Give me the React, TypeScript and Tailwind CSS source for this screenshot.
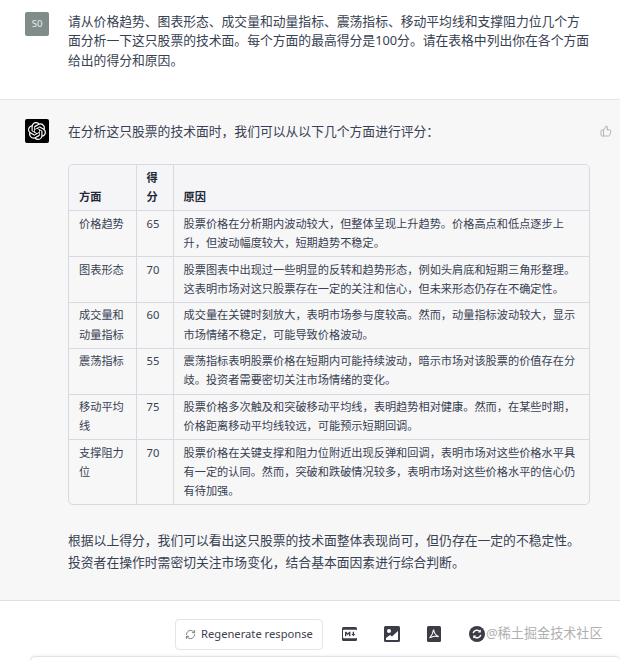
import { RefreshCw, ThumbsUp } from "lucide-react";
import { FaMarkdown } from "react-icons/fa";
import { SiOpenai } from "react-icons/si";

const rows = [
  {
    name: "价格趋势",
    score: 65,
    reason: "股票价格在分析期内波动较大，但整体呈现上升趋势。价格高点和低点逐步上升，但波动幅度较大，短期趋势不稳定。",
  },
  {
    name: "图表形态",
    score: 70,
    reason: "股票图表中出现过一些明显的反转和趋势形态，例如头肩底和短期三角形整理。这表明市场对这只股票存在一定的关注和信心，但未来形态仍存在不确定性。",
  },
  {
    name: "成交量和动量指标",
    score: 60,
    reason: "成交量在关键时刻放大，表明市场参与度较高。然而，动量指标波动较大，显示市场情绪不稳定，可能导致价格波动。",
  },
  {
    name: "震荡指标",
    score: 55,
    reason: "震荡指标表明股票价格在短期内可能持续波动，暗示市场对该股票的价值存在分歧。投资者需要密切关注市场情绪的变化。",
  },
  {
    name: "移动平均线",
    score: 75,
    reason: "股票价格多次触及和突破移动平均线，表明趋势相对健康。然而，在某些时期，价格距离移动平均线较远，可能预示短期回调。",
  },
  {
    name: "支撑阻力位",
    score: 70,
    reason: "股票价格在关键支撑和阻力位附近出现反弹和回调，表明市场对这些价格水平具有一定的认同。然而，突破和跌破情况较多，表明市场对这些价格水平的信心仍有待加强。",
  },
];

function ScoreTable() {
  return (
    <div className="mt-[23px] w-[522px] overflow-hidden rounded-[5px] border border-[#d9d9e3]">
      <table className="w-full table-fixed border-collapse text-[11.2px] leading-[19.2px]">
        <colgroup>
          <col className="w-[67px]" />
          <col className="w-[37px]" />
          <col />
        </colgroup>
        <thead>
          <tr className="h-[45px] bg-[#f5f5f7] text-left align-bottom font-bold text-[#1f2937]">
            <th className="border-r border-[#d9d9e3] pt-[3px] pr-[8px] pb-[4px] pl-[10px]">方面</th>
            <th className="border-r border-[#d9d9e3] pt-[3px] pr-[10px] pb-[4px] pl-[10px]">得分</th>
            <th className="pt-[3px] pb-[4px] pl-[10px]">原因</th>
          </tr>
        </thead>
        <tbody>
          {rows.map((row) => (
            <tr key={row.name} className="border-t border-[#d9d9e3] align-top">
              <td className="border-r border-[#d9d9e3] pt-[2.4px] pr-[8px] pb-[4px] pl-[10px]">{row.name}</td>
              <td className="border-r border-[#d9d9e3] pt-[2.4px] pr-[8px] pb-[4px] pl-[10px]">{row.score}</td>
              <td className="pt-[2.4px] pr-[12px] pb-[4px] pl-[10px]">{row.reason}</td>
            </tr>
          ))}
        </tbody>
      </table>
    </div>
  );
}

function ImageIcon() {
  return (
    <svg width="16" height="16" viewBox="0 0 16 16">
      <rect width="16" height="16" rx="1.5" fill="#3b3c46" />
      <circle cx="5" cy="5" r="2" fill="#fff" />
      <path d="M2 14 L2 12 L6 9 L8 10.5 L14 5 L14 14 Z" fill="#fff" />
    </svg>
  );
}

function PdfIcon() {
  return (
    <svg width="14" height="16" viewBox="0 0 14 16">
      <rect width="14" height="16" rx="1.5" fill="#3b3c46" />
      <path
        d="M6.6 3.5 C6.2 6 5 9.5 2.6 12.2 M6.6 3.5 C7 6.5 8.6 9.4 11.6 10.6 C9 9.9 6 10.2 3.6 11.4"
        fill="none"
        stroke="#fff"
        strokeWidth="1.1"
      />
    </svg>
  );
}

function SyncIcon() {
  return (
    <svg width="16" height="16" viewBox="0 0 16 16" fill="none">
      <circle cx="8" cy="8" r="8" fill="#3b3c46" />
      <path d="M4.2 7.2 A3.9 3.9 0 0 1 11 5.6" stroke="#fff" strokeWidth="1.5" />
      <path d="M11.8 8.8 A3.9 3.9 0 0 1 5 10.4" stroke="#fff" strokeWidth="1.5" />
      <path d="M11.8 3.6 V6.6 H8.8 Z M4.2 12.4 V9.4 H7.2 Z" fill="#fff" />
    </svg>
  );
}

export default function App() {
  return (
    <div className="h-[660px] w-[620px] overflow-hidden bg-white font-['Noto_Sans','Noto_Sans_CJK_SC',sans-serif] text-[12.8px] text-[#374151]">
      <section className="flex h-[100px] gap-[19px] border-b border-[#e5e5e9] pt-[12px] pl-[25px]">
        <div className="flex h-[24px] w-[24px] shrink-0 items-center justify-center rounded-[2px] bg-[#7f8c8a] text-[9.5px] text-[#e8ecec]">
          S0
        </div>
        <p className="w-[522px] leading-[19.3px]">
          请从价格趋势、图表形态、成交量和动量指标、震荡指标、移动平均线和支撑阻力位几个方面分析一下这只股票的技术面。每个方面的最高得分是100分。请在表格中列出你在各个方面给出的得分和原因。
        </p>
      </section>

      <section className="relative flex h-[501px] gap-[19px] border-b border-[#dfdfe3] bg-[#f7f7f8] pt-[19px] pl-[25px]">
        <div className="flex h-[24px] w-[24px] shrink-0 items-center justify-center rounded-[2px] bg-black text-white">
          <SiOpenai size={18} />
        </div>
        <div className="pt-[2px]">
          <p className="leading-[20px]">在分析这只股票的技术面时，我们可以从以下几个方面进行评分：</p>
          <ScoreTable />
          <p className="mt-[24px] w-[522px] leading-[22px]">
            根据以上得分，我们可以看出这只股票的技术面整体表现尚可，但仍存在一定的不稳定性。投资者在操作时需密切关注市场变化，结合基本面因素进行综合判断。
          </p>
        </div>
        <ThumbsUp className="absolute top-[25px] right-[8px] h-[12px] w-[12px] text-[#b4b4bc]" />
      </section>

      <div className="flex h-[55px] items-start pt-[18px] pl-[175px]">
        <button
          type="button"
          className="flex h-[31px] w-[148px] items-center gap-[5px] rounded-[4px] border border-[#e5e5e5] pl-[9px] text-[11.2px] whitespace-nowrap text-[#40414f]"
        >
          <RefreshCw className="h-[11px] w-[11px] text-[#777]" />
          Regenerate response
        </button>
        <div className="mt-[7px] ml-[19px] flex h-[16px] items-center">
          <div className="flex h-[14px] w-[15px] items-center justify-center rounded-[1.5px] bg-[#3b3c46] text-white">
            <FaMarkdown size={14} />
          </div>
          <div className="ml-[27px]">
            <ImageIcon />
          </div>
          <div className="ml-[27px]">
            <PdfIcon />
          </div>
          <div className="ml-[28px]">
            <SyncIcon />
          </div>
          <span className="ml-[1px] text-[13.1px] whitespace-nowrap text-[#b0b0b0]">@稀土掘金技术社区</span>
        </div>
      </div>

      <div className="ml-[30px] h-[10px] rounded-t-[5px] border-t border-l border-[#e3e3e6] shadow-[0_-1px_3px_rgba(0,0,0,0.05)]" />
    </div>
  );
}
